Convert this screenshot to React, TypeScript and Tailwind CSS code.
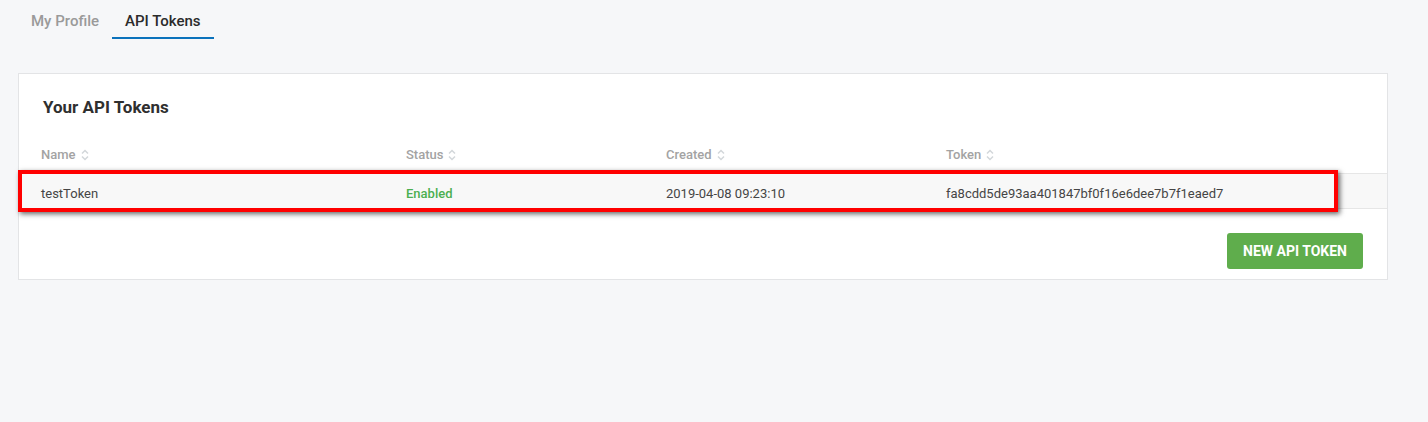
import React from 'react';

const SortIcon = () => (
  <svg width="8" height="14" viewBox="0 0 8 14" className="ml-[5px] inline-block">
    <path d="M1 5.5 L4 2.5 L7 5.5" fill="none" stroke="#d3d7da" strokeWidth="1.5" />
    <path d="M1 8.5 L4 11.5 L7 8.5" fill="none" stroke="#d3d7da" strokeWidth="1.5" />
  </svg>
);

const columns = [
  { label: 'Name', width: 'w-[365px]' },
  { label: 'Status', width: 'w-[260px]' },
  { label: 'Created', width: 'w-[280px]' },
  { label: 'Token', width: 'flex-1' },
];

const App = () => {
  return (
    <div className="min-h-screen bg-[#f6f7f9] font-['Roboto',sans-serif]">
      <div className="flex pl-[18px]">
        <div className="px-[13px] pt-[11px] pb-[6px] text-[15px] leading-5 font-medium text-[#9a9a9a] border-b-2 border-transparent">
          My Profile
        </div>
        <div className="px-[13px] pt-[11px] pb-[6px] text-[15px] leading-5 font-medium text-[#2b2b2b] border-b-2 border-[#0b72bc]">
          API Tokens
        </div>
      </div>

      <div className="ml-[18px] mt-[34px] w-[1370px] bg-white border border-[#e3e4e6]">
        <h2 className="pl-[24px] pt-[23px] text-[17px] leading-5 font-bold text-[#2f2f2f]">Your API Tokens</h2>

        <div className="flex pl-[22px] pt-[28px] pb-[8px] text-[13px] leading-5 font-medium text-[#a3a3a3]">
          {columns.map((c) => (
            <div key={c.label} className={`${c.width} flex items-center`}>
              {c.label}
              <SortIcon />
            </div>
          ))}
        </div>

        <div className="relative flex items-start h-[36px] pl-[22px] pt-[10px] bg-[#f8f8f8] border-y border-[#e6e6e6] text-[13px] leading-5 text-[#454545]">
          <div className="w-[365px]">testToken</div>
          <div className="w-[260px] font-medium text-[#4caf50]">Enabled</div>
          <div className="w-[280px]">2019-04-08 09:23:10</div>
          <div className="flex-1">fa8cdd5de93aa401847bf0f16e6dee7b7f1eaed7</div>
          <div className="absolute left-[-1px] top-[-4px] w-[1320px] h-[42px] border-[4px] border-[#ff0000] shadow-[2px_2px_5px_rgba(0,0,0,0.6)] pointer-events-none" />
        </div>

        <div className="flex justify-end pt-[24px] pb-[10px] pr-[24px]">
          <button className="w-[136px] h-[36px] rounded-[3px] bg-[#5fad4c] text-white text-[14px] font-bold uppercase">
            New API Token
          </button>
        </div>
      </div>
    </div>
  );
};

export default App;
